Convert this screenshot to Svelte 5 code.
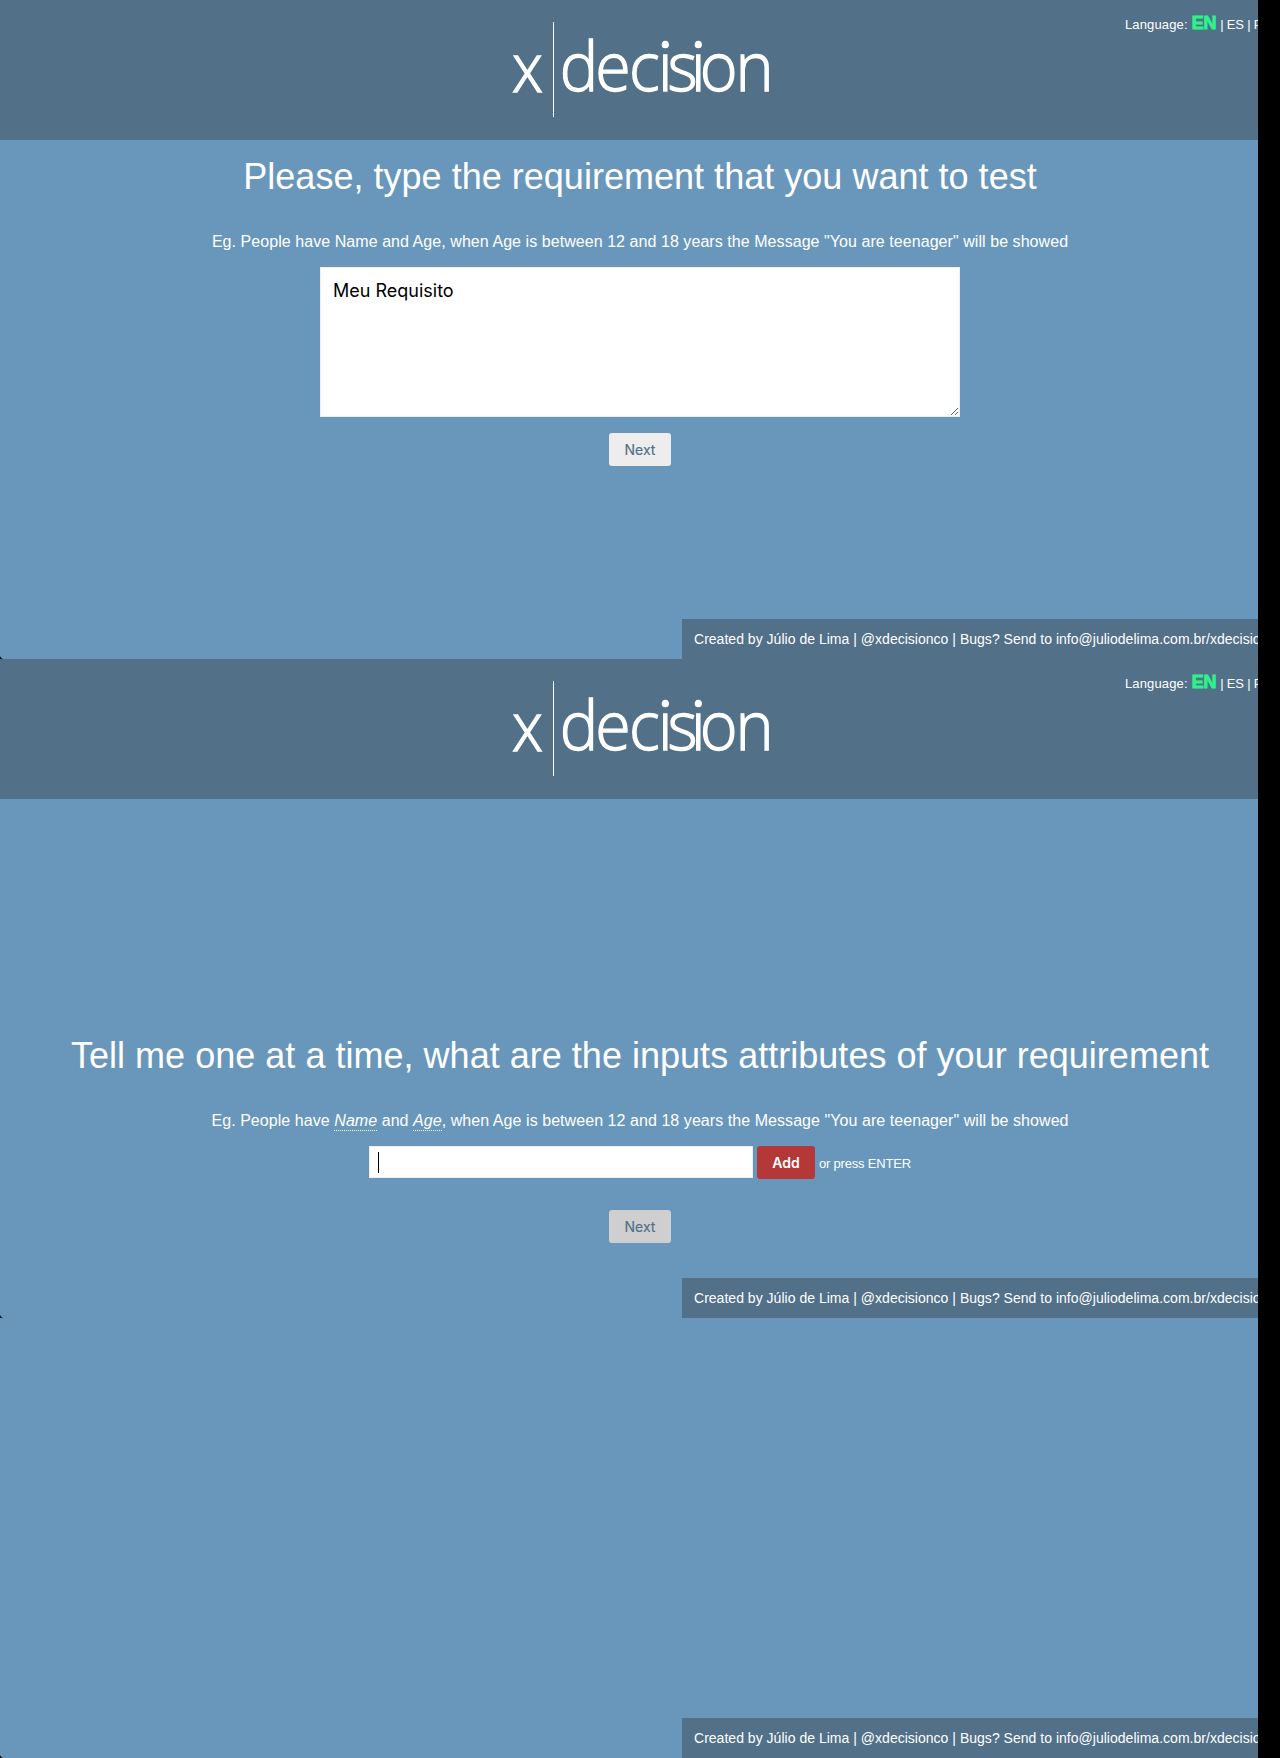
<script>
  const footer = 'Created by Júlio de Lima | @xdecisionco | Bugs? Send to info@juliodelima.com.br/xdecision';
</script>

{#snippet header()}
  <header class="header">
    <svg class="logo" width="280" height="110" viewBox="0 0 280 110" role="img" aria-label="x decision">
      <text class="logo-text" x="12" y="76.5" textLength="31" lengthAdjust="spacingAndGlyphs">x</text>
      <rect x="53" y="7" width="1" height="95" fill="#fff" />
      <text class="logo-text" transform="scale(0.95 1)" x="62.9 100.3 135.8 166.3 176.3 201 210.2 248" y="76.5">decision</text>
      <circle cx="165.3" cy="29.7" r="3.6" fill="#fff" />
      <circle cx="198.3" cy="29.7" r="3.6" fill="#fff" />
    </svg>
    <nav class="languages">
      <span>Language:</span> <b>EN</b> <span>| ES | PT</span>
    </nav>
  </header>
{/snippet}

{#snippet credits()}
  <footer class="footer">{footer}</footer>
{/snippet}

<div class="page">
  <section class="screen">
    {@render header()}
    <main class="content first">
      <h1 class="title">Please, type the requirement that you want to test</h1>
      <p class="example">Eg. People have Name and Age, when Age is between 12 and 18 years the Message "You are teenager" will be showed</p>
      <textarea class="requirement">Meu Requisito</textarea>
      <button class="button">Next</button>
    </main>
    {@render credits()}
    <i class="corner"></i>
  </section>

  <section class="screen">
    {@render header()}
    <main class="content second">
      <h1 class="title">Tell me one at a time, what are the inputs attributes of your requirement</h1>
      <p class="example">Eg. People have <em>Name</em> and <em>Age</em>, when Age is between 12 and 18 years the Message "You are teenager" will be showed</p>
      <div class="row">
        <div class="input"><span class="caret"></span></div>
        <button class="button add">Add</button>
        <span class="hint">or press ENTER</span>
      </div>
      <button class="button disabled">Next</button>
    </main>
    {@render credits()}
    <i class="corner"></i>
  </section>

  <section class="screen last">
    {@render credits()}
    <i class="corner"></i>
  </section>
  <div class="edge"></div>
</div>

<style>
  :global(body) { margin: 0; }
  .page {
    position: relative;
    width: 1280px;
    height: 1758px;
    overflow: hidden;
    background: #6997bb;
    color: #fff;
    font-family: "Liberation Sans", Arial, sans-serif;
  }
  .screen {
    position: relative;
    display: flex;
    flex-direction: column;
    height: 659px;
  }
  .last { height: 440px; }
  .header {
    position: relative;
    display: flex;
    flex: none;
    justify-content: center;
    align-items: flex-start;
    box-sizing: border-box;
    height: 140px;
    padding-top: 15px;
    background: #527088;
  }
  .logo { display: block; overflow: visible; }
  .logo-text {
    font: 300 68px "Open Sans", sans-serif;
    fill: #fff;
    stroke: #fff;
    stroke-width: 1.3px;
  }
  .languages {
    position: absolute;
    top: 12px;
    left: 1125px;
    display: flex;
    align-items: baseline;
    gap: 4px;
    font-size: 13px;
    line-height: 22px;
    white-space: nowrap;
  }
  .languages span:first-child { letter-spacing: 0.13px; }
  .languages span:last-child { letter-spacing: -0.2px; }
  .languages b {
    color: #2cf588;
    font-size: 18px;
    letter-spacing: -0.2px;
    -webkit-text-stroke: 0.8px #2cf588;
  }
  .content {
    display: flex;
    flex: 1;
    flex-direction: column;
    align-items: center;
  }
  .first { padding-top: 16px; }
  .second { padding-top: 236px; }
  .title {
    margin: 0;
    font-size: 36px;
    font-weight: 400;
    line-height: 42px;
    letter-spacing: 0.02px;
    white-space: nowrap;
  }
  .example {
    margin: 34px 0 0;
    font-size: 16px;
    line-height: 20px;
    letter-spacing: 0.06px;
    white-space: nowrap;
  }
  .example em {
    display: inline-block;
    line-height: 19px;
    border-bottom: 1px dotted #fff;
  }
  .requirement {
    box-sizing: border-box;
    width: 640px;
    height: 150px;
    margin: 15px 0 16px;
    padding: 12px;
    border: 1px solid #eee;
    outline: 0;
    background: #fff;
    color: #000;
    font: 18px/22px Inter, sans-serif;
  }
  .button {
    box-sizing: border-box;
    flex: none;
    width: 62px;
    height: 33px;
    padding: 0;
    border: 0;
    border-radius: 3px;
    background: #ededed;
    color: #527088;
    font: 400 14px/33px Inter, sans-serif;
    -webkit-text-stroke: 0.15px currentColor;
  }
  .row {
    display: flex;
    align-items: flex-start;
    gap: 4px;
    width: 542px;
    height: 33px;
    margin: 15px 0 31px;
  }
  .input {
    display: flex;
    flex: none;
    box-sizing: border-box;
    width: 384px;
    height: 32px;
    padding: 5px 8px;
    border: 1px solid #eee;
    background: #fff;
  }
  .caret { width: 1px; height: 21px; background: #000; }
  .add { width: 58px; background: #b43838; color: #fff; font-weight: 600; -webkit-text-stroke: 0; }
  .disabled { background: #cfcfcf; }
  .hint { font-size: 13px; line-height: 35px; letter-spacing: -0.2px; white-space: nowrap; }
  .footer {
    box-sizing: border-box;
    flex: none;
    width: 598px;
    height: 40px;
    margin: auto 0 0 auto;
    padding-left: 12px;
    background: #527088;
    font-size: 14px;
    line-height: 40px;
    letter-spacing: 0.02px;
    white-space: nowrap;
  }
  .corner {
    position: absolute;
    left: 0;
    bottom: 0;
    width: 4px;
    height: 4px;
    background: radial-gradient(circle at 4px 0, transparent 3.6px, #000 4.4px);
  }
  .edge {
    position: absolute;
    top: 0;
    right: 0;
    width: 22px;
    height: 100%;
    background: #000;
  }
</style>
